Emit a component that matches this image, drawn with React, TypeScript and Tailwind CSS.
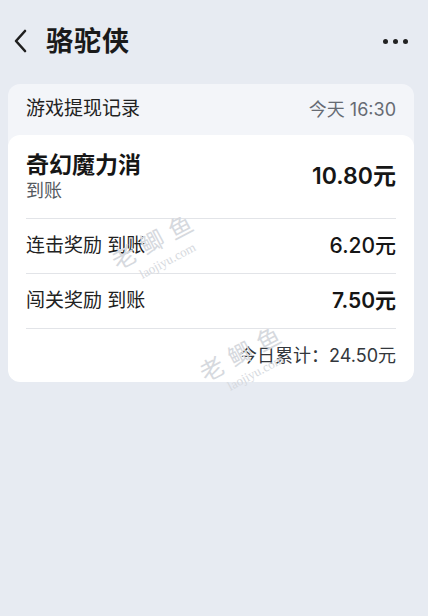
export default function App() {
  const font = { fontFamily: 'Inter, "Noto Sans CJK SC", "Noto Sans", sans-serif' };

  return (
    <div
      className="relative w-[428px] h-[616px] overflow-hidden bg-[#e7ebf2] text-[#1a1a1a]"
      style={font}
    >
      {/* Header */}
      <div className="flex items-center justify-between h-[84px] pl-[12px] pr-[20px] pb-[2px]">
        <div className="flex items-center gap-[16px]">
          <svg width="18" height="26" viewBox="0 0 18 26" fill="none" stroke="#1f1f1f" strokeWidth="2.6" strokeLinecap="round" strokeLinejoin="round">
            <path d="M13 3L4 13l9 10" />
          </svg>
          <span className="text-[27px] font-bold leading-none tracking-[1px]">骆驼侠</span>
        </div>
        <div className="flex items-center gap-[5px]">
          <span className="w-[5px] h-[5px] rounded-full bg-[#222]" />
          <span className="w-[5px] h-[5px] rounded-full bg-[#222]" />
          <span className="w-[5px] h-[5px] rounded-full bg-[#222]" />
        </div>
      </div>

      {/* Card */}
      <div className="mx-[8px] w-[406px] rounded-[12px] bg-[#f3f5f9] overflow-hidden">
        <div className="flex items-center justify-between h-[51px] px-[18px]">
          <span className="text-[19px] text-[#222]">游戏提现记录</span>
          <span className="text-[18px] text-[#666b73]">今天 16:30</span>
        </div>
        <div className="bg-white rounded-[12px] px-[18px]">
          <div className="flex items-center justify-between h-[84px] border-b border-[#e2e4e8]">
            <div className="flex flex-col">
              <span className="text-[23px] font-bold leading-[28px] text-[#161616]">奇幻魔力消</span>
              <span className="text-[18px] leading-[24px] text-[#555a60]">到账</span>
            </div>
            <span className="text-[23px] font-semibold text-[#161616]">10.80元</span>
          </div>
          <div className="flex items-center justify-between h-[55px] border-b border-[#e2e4e8]">
            <span className="text-[19px] text-[#222]">连击奖励 到账</span>
            <span className="text-[21px] font-medium text-[#161616]">6.20元</span>
          </div>
          <div className="flex items-center justify-between h-[55px] border-b border-[#e2e4e8]">
            <span className="text-[19px] text-[#222]">闯关奖励 到账</span>
            <span className="text-[21px] font-semibold text-[#161616]">7.50元</span>
          </div>
          <div className="flex items-center justify-end h-[53px]">
            <span className="text-[18px] text-[#33373c]">今日累计：24.50元</span>
          </div>
        </div>
      </div>

      {/* Watermarks */}
      <div className="absolute left-[112px] top-[228px] -rotate-[28deg] text-[#d6d9de] pointer-events-none">
        <div className="text-[24px] tracking-[8px] leading-none">老鲫鱼</div>
        <div className="text-[13px] leading-none mt-[4px] ml-[18px]" style={{ fontFamily: '"Liberation Serif", serif' }}>laojiyu.com</div>
      </div>
      <div className="absolute left-[200px] top-[340px] -rotate-[28deg] text-[#d6d9de] pointer-events-none">
        <div className="text-[24px] tracking-[8px] leading-none">老鲫鱼</div>
        <div className="text-[13px] leading-none mt-[4px] ml-[18px]" style={{ fontFamily: '"Liberation Serif", serif' }}>laojiyu.com</div>
      </div>
    </div>
  );
}
